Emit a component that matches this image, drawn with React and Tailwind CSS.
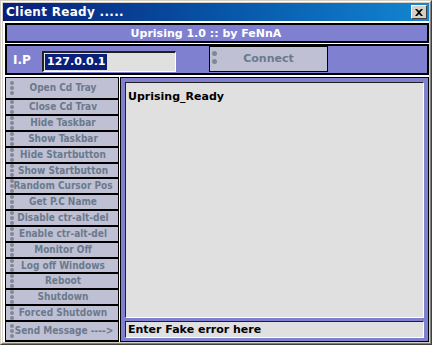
import React from "react";

const F = { fontFamily: '"DejaVu Sans", Verdana, sans-serif' };
const C = { fontFamily: '"DejaVu Sans Condensed", "DejaVu Sans", Verdana, sans-serif' };

const buttons = [
  "Open Cd Tray",
  "Close Cd Trav",
  "Hide Taskbar",
  "Show Taskbar",
  "Hide Startbutton",
  "Show Startbutton",
  "Random Cursor Pos",
  "Get P.C Name",
  "Disable ctr-alt-del",
  "Enable ctr-alt-del",
  "Monitor Off",
  "Log off Windows",
  "Reboot",
  "Shutdown",
  "Forced Shutdown",
  "Send Message ---->",
];

const heights = [
  "h-[20px]",
  "h-[14px]",
  "h-[14px]",
  "h-[14px]",
  "h-[14px]",
  "h-[13px]",
  "h-[14px]",
  "h-[14px]",
  "h-[14px]",
  "h-[14px]",
  "h-[14px]",
  "h-[13px]",
  "h-[14px]",
  "h-[14px]",
  "h-[14px]",
  "h-[18px]",
];

function Dots() {
  return (
    <div className="absolute left-[4px] top-0 bottom-0 flex flex-col justify-center gap-[1px]">
      <div className="w-[4px] h-[4px] rounded-full bg-[#7f8894]" />
      <div className="w-[4px] h-[4px] rounded-full bg-[#7f8894]" />
      <div className="w-[4px] h-[4px] rounded-full bg-[#7f8894]" />
    </div>
  );
}

export default function App() {
  return (
    <div
      className="w-[432px] h-[345px] bg-[#d4d0c8] border border-t-[#d4d0c8] border-l-[#d4d0c8] border-r-[#404040] border-b-[#404040] overflow-hidden"
      style={F}
    >
      <div className="w-full h-full border border-t-white border-l-white border-r-[#808080] border-b-[#808080] p-[1px] flex flex-col">
        {/* title bar */}
        <div className="h-[18px] shrink-0 flex items-center justify-between pl-[3px] pr-[2px] bg-gradient-to-r from-[#0a1f7a] to-[#1486d2]">
          <span className="text-white font-bold text-[12px] leading-none tracking-[0.3px]">
            Client Ready .....
          </span>
          <div className="w-[16px] h-[14px] bg-[#d4d0c8] border border-t-white border-l-white border-r-[#404040] border-b-[#404040] flex items-center justify-center">
            <svg width="8" height="7" viewBox="0 0 8 7">
              <path d="M0 0h2l2 2 2-2h2L5 3.5 8 7H6L4 5 2 7H0l3-3.5z" fill="#000" />
            </svg>
          </div>
        </div>
        {/* body */}
        <div className="flex-1 bg-white flex flex-col pl-[2px] pt-[2px] gap-[1px]">
          <div className="h-[20px] shrink-0 border-2 border-black bg-[#8080d0] flex items-center justify-center pr-[22px]">
            <span className="text-white font-bold text-[11px] leading-none">
              Uprising 1.0 :: by FeNnA
            </span>
          </div>
          <div className="h-[31px] shrink-0 border-2 border-black bg-[#8080d0] flex items-center">
            <span className="text-white font-bold text-[12px] leading-none ml-[6px] w-[29px]">
              I.P
            </span>
            <div className="w-[134px] h-[21px] mt-[4px] bg-[#e0e0e0] border-t-2 border-l-2 border-t-[#202020] border-l-[#202020] border-r border-b border-r-white border-b-white flex items-center pl-[1px]">
              <span className="bg-[#0a1f7a] text-white font-bold text-[11px] leading-[16px] px-[2px]">
                127.0.0.1
              </span>
            </div>
            <div className="relative ml-[33px] w-[119px] h-[26px] -mt-[2px] bg-[#c0c0d4] border border-black flex items-center justify-center">
              <div className="absolute left-[2px] top-[4px] flex flex-col gap-[3px]">
                <div className="w-[5px] h-[5px] rounded-full bg-[#7f8894]" />
                <div className="w-[5px] h-[5px] rounded-full bg-[#7f8894]" />
              </div>
              <span className="text-[#6a7a8c] font-bold text-[11px] leading-none">Connect</span>
            </div>
          </div>
          <div className="flex-1 flex gap-[1px] pt-[1px] min-h-0">
            {/* left button panel */}
            <div className="w-[114px] bg-black border border-black flex flex-col gap-[2px]">
              {buttons.map((b, i) => (
                <div
                  key={b}
                  className={`relative bg-[#c0c0d4] flex items-center justify-center ${heights[i]}`}
                >
                  <Dots />
                  <span
                    style={C}
                    className={`text-[#6a7a8c] font-bold text-[10px] leading-none whitespace-nowrap ${
                      i === buttons.length - 1 ? "pl-[4px]" : "pl-[2px]"
                    }`}
                  >
                    {b}
                  </span>
                </div>
              ))}
            </div>
            {/* right panel */}
            <div className="flex-1 border border-black bg-[#8080d0] p-[4px] pb-[3px] flex flex-col gap-[3px]">
              <div className="flex-1 bg-[#e0e0e0] border-t border-l border-t-[#202020] border-l-[#202020] border-r border-b border-r-white border-b-white px-[2px] pt-[0px]">
                <span className="text-black font-bold text-[11px] leading-none">Uprising_Ready</span>
              </div>
              <div className="h-[17px] shrink-0 bg-[#e0e0e0] border-t border-l border-t-[#202020] border-l-[#202020] border-r border-b border-r-white border-b-white px-[2px] flex items-center">
                <span className="text-black font-bold text-[11px] leading-none">Enter Fake error here</span>
              </div>
            </div>
          </div>
        </div>
      </div>
    </div>
  );
}
